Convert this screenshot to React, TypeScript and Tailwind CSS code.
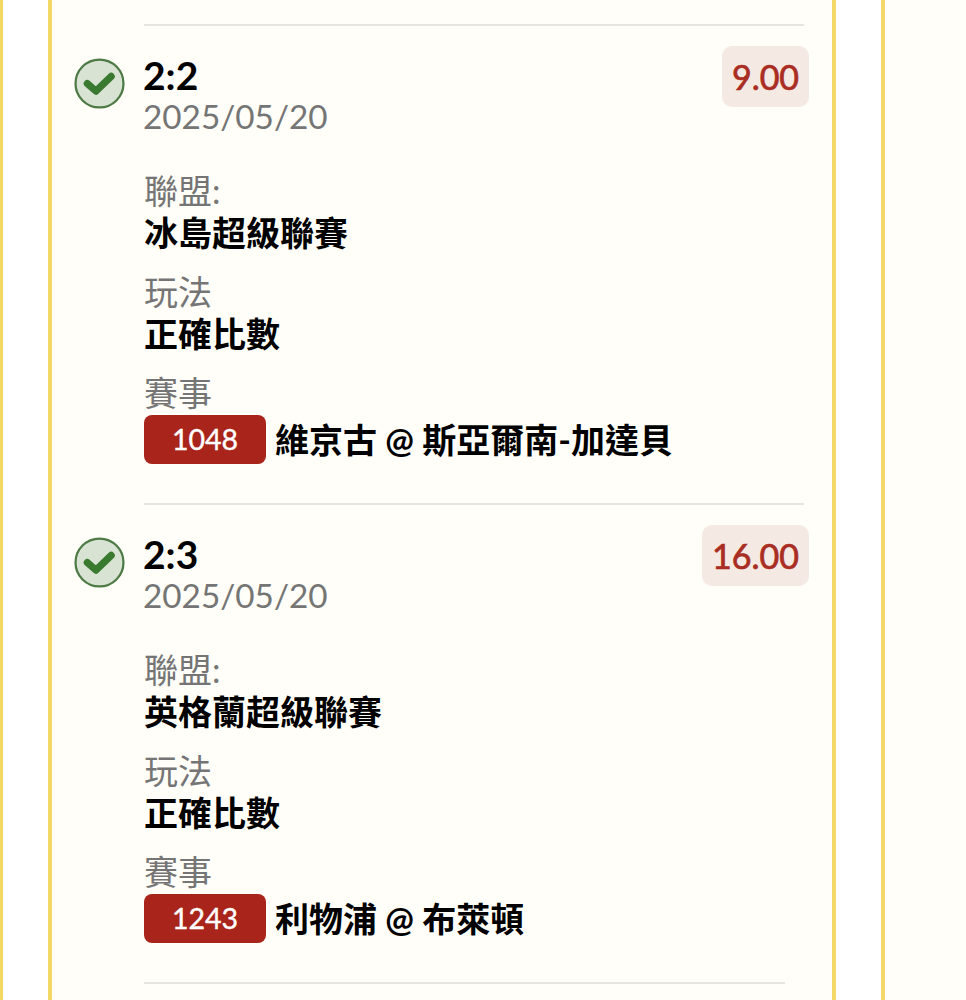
const FONT = "font-['Lato','Noto_Sans_CJK_TC',sans-serif]";

function Check() {
  return (
    <svg width="51" height="51" viewBox="0 0 50 50" className="shrink-0">
      <circle cx="25" cy="25" r="23.5" fill="#d9e3d3" stroke="#4d7a45" strokeWidth="2.2" />
      <path d="M13 25 L21.5 32.5 L36.5 18" fill="none" stroke="#3a7a30" strokeWidth="7" strokeLinecap="round" strokeLinejoin="round" />
    </svg>
  );
}

function Row({ score, odds, league, code, match, oddsW }: { score: string; odds: string; league: string; code: string; match: string; oddsW: string }) {
  return (
    <div className="flex flex-col">
      <div className="ml-[92px] mr-[28px] h-[2px] bg-[#e6e6e0]" />
      <div className="relative h-[477.1px] pl-[91px] pt-[29px]">
        <div className="absolute left-[22px] top-[32px]"><Check /></div>
        <div className={`absolute right-[23px] top-[20px] flex h-[61px] items-center justify-center rounded-[10px] bg-[#f4e9e3] text-[34px] text-[#a92d22] [-webkit-text-stroke:0.7px_#a92d22] ${oddsW}`}>{odds}</div>
        <div className="text-[39px] font-bold leading-[40px] text-black">{score}</div>
        <div className="text-[33.3px] leading-[42px] text-[#757575]">2025/05/20</div>
        <div className="ml-[1px] mt-[32px] text-[34px] leading-[44px] text-[#757575]">聯盟:</div>
        <div className="ml-[1px] text-[34px] font-bold leading-[40px] text-black">{league}</div>
        <div className="ml-[1px] mt-[17px] text-[34px] leading-[44px] text-[#757575]">玩法</div>
        <div className="ml-[1px] text-[34px] font-bold leading-[40px] text-black">正確比數</div>
        <div className="ml-[1px] mt-[17px] text-[34px] leading-[44px] text-[#757575]">賽事</div>
        <div className="flex items-center gap-[9px]">
          <span className="ml-[1px] flex h-[49px] w-[122px] items-center justify-center rounded-[8px] bg-[#a9241a] text-[28.5px] text-white [-webkit-text-stroke:0.4px_#ffffff]">{code}</span>
          <span className="text-[34px] font-bold leading-[49px] text-black">{match}</span>
        </div>
      </div>
    </div>
  );
}

export default function App() {
  return (
    <div className={`flex h-[1000px] w-[966px] overflow-hidden bg-white ${FONT}`}>
      <div className="h-full w-[3px] shrink-0 bg-[#f4d862]" />
      <div className="ml-[45px] h-full w-[788px] shrink-0 border-x-[4px] border-[#f3d868] bg-[#fffef8] pt-[24px]">
        <Row score="2:2" odds="9.00" oddsW="w-[87px]" league="冰島超級聯賽" code="1048" match="維京古 @ 斯亞爾南-加達貝" />
        <Row score="2:3" odds="16.00" oddsW="w-[107px]" league="英格蘭超級聯賽" code="1243" match="利物浦 @ 布萊頓" />
        <div className="ml-[92px] mr-[47px] h-[2px] bg-[#e6e6e0]" />
      </div>
      <div className="ml-[45px] h-full flex-1 border-l-[4px] border-[#f3d868] bg-[#fffef8]" />
    </div>
  );
}
